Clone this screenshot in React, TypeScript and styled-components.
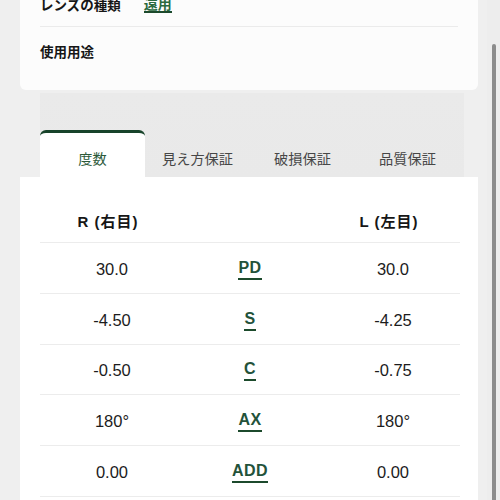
import React from 'react';
import styled, { createGlobalStyle } from 'styled-components';

const GlobalStyle = createGlobalStyle`
  html, body { margin: 0; padding: 0; background: #efefef; overflow: hidden; }
  body { font-family: "Liberation Sans", "Noto Sans CJK JP", sans-serif; color: #1a1a1a; }
`;

const Page = styled.div`
  padding: 0 22px 0 20px;
  height: 500px;
  overflow: hidden;
`;

const InfoCard = styled.div`
  margin-top: -18px;
  padding: 0 20px;
  background: #fcfcfc;
  border-radius: 0 0 6px 6px;
`;

const InfoRow = styled.div<{ $last?: boolean }>`
  display: flex;
  gap: 23px;
  height: ${({ $last }) => ($last ? '63px' : '45px')};
  align-items: ${({ $last }) => ($last ? 'flex-start' : 'center')};
  padding-top: ${({ $last }) => ($last ? '14px' : '0')};
  box-sizing: border-box;
  border-bottom: ${({ $last }) => ($last ? 'none' : '1px solid #ebebeb')};
`;

const InfoLabel = styled.span`
  font-family: "Noto Sans CJK JP", sans-serif;
  font-size: 13.5px;
  font-weight: 700;
  color: #161616;
`;

const InfoValue = styled.span`
  font-family: "Noto Sans CJK JP", sans-serif;
  font-size: 14px;
  font-weight: 700;
  color: #2b6a3f;
  border-bottom: 2px solid #1c4a2c;
  line-height: 16px;
`;

const TabsArea = styled.div`
  margin: 3px 14px 0 20px;
  padding-top: 37px;
  background: linear-gradient(#eaeaea, #e9e9e9);
`;

const TabList = styled.div`
  display: grid;
  grid-template-columns: repeat(4, 105px);
`;

const Tab = styled.div<{ $active?: boolean }>`
  height: 47px;
  box-sizing: border-box;
  display: flex;
  align-items: center;
  justify-content: center;
  font-family: "Noto Sans CJK JP", sans-serif;
  font-size: 14.2px;
  padding-top: 6px;
  color: ${({ $active }) => ($active ? '#2c5a3a' : '#474747')};
  background: ${({ $active }) => ($active ? '#ffffff' : 'transparent')};
  border-top: 3px solid ${({ $active }) => ($active ? '#17432a' : 'transparent')};
  border-radius: 6px 6px 0 0;
`;

const TableCard = styled.div`
  background: #ffffff;
  padding: 0 18px 0 20px;
  height: 400px;
`;

const Row = styled.div<{ $header?: boolean }>`
  display: grid;
  grid-template-columns: 140px 140px 140px;
  align-items: center;
  justify-items: center;
  height: ${({ $header }) => ($header ? '66px' : '50.8px')};
  padding-top: ${({ $header }) => ($header ? '22px' : '3px')};
  box-sizing: border-box;
  border-bottom: 1px solid #ececec;
`;

const HeadCell = styled.span<{ $side: 'left' | 'right' }>`
  font-size: 15px;
  font-weight: 700;
  letter-spacing: 1px;
  color: #161616;
  white-space: pre;
  transform: translateX(${({ $side }) => ($side === 'left' ? '-2px' : '-1px')});
`;

const Value = styled.span<{ $side: 'left' | 'right' }>`
  font-size: 16.5px;
  color: #1c1c1c;
  transform: translateX(${({ $side }) => ($side === 'left' ? '2px' : '3px')});
`;

const Param = styled.span`
  font-size: 16px;
  font-weight: 700;
  color: #23523a;
  line-height: 18px;
  padding-bottom: 1px;
  border-bottom: 2px solid #1c4a2c;
  letter-spacing: 0.4px;
`;

const ScrollTrack = styled.div`
  position: fixed;
  top: 0;
  right: 0;
  width: 13px;
  height: 500px;
  background: #ededed;
`;

const ScrollThumb = styled.div`
  position: absolute;
  top: 44px;
  left: 5px;
  width: 4px;
  height: 470px;
  border-radius: 2px;
  background: #8c8c8c;
`;

const rows = [
  { r: '30.0', label: 'PD', l: '30.0' },
  { r: '-4.50', label: 'S', l: '-4.25' },
  { r: '-0.50', label: 'C', l: '-0.75' },
  { r: '180°', label: 'AX', l: '180°' },
  { r: '0.00', label: 'ADD', l: '0.00' },
];

const tabs = ['度数', '見え方保証', '破損保証', '品質保証'];

export default function App() {
  return (
    <>
      <GlobalStyle />
      <Page>
        <InfoCard>
          <InfoRow>
            <InfoLabel>レンズの種類</InfoLabel>
            <InfoValue>遠用</InfoValue>
          </InfoRow>
          <InfoRow $last>
            <InfoLabel>使用用途</InfoLabel>
          </InfoRow>
        </InfoCard>

        <TabsArea>
          <TabList>
            {tabs.map((t, i) => (
              <Tab key={t} $active={i === 0}>{t}</Tab>
            ))}
          </TabList>
        </TabsArea>

        <TableCard>
          <Row $header>
            <HeadCell $side="left">R (右目)</HeadCell>
            <span />
            <HeadCell $side="right">L (左目)</HeadCell>
          </Row>
          {rows.map((row) => (
            <Row key={row.label}>
              <Value $side="left">{row.r}</Value>
              <Param>{row.label}</Param>
              <Value $side="right">{row.l}</Value>
            </Row>
          ))}
        </TableCard>
      </Page>
      <ScrollTrack>
        <ScrollThumb />
      </ScrollTrack>
    </>
  );
}
